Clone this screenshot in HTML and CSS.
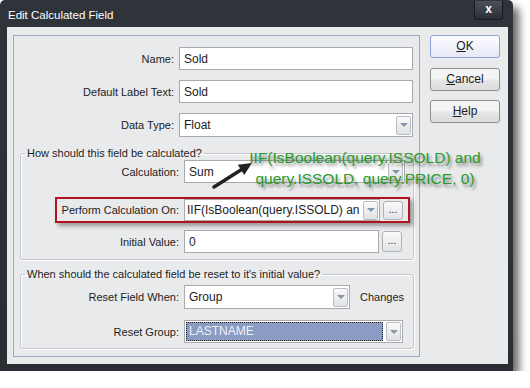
FILE: index.html
```html
<!DOCTYPE html>
<html lang="en">
<head>
    <meta charset="UTF-8">
    <title>Edit Calculated Field</title>
    <link rel="stylesheet" href="styles.css">
</head>
<body>
    <div class="window">
        <div class="titlebar">
            <span class="title">Edit Calculated Field</span>
            <span class="close">x</span>
        </div>
        <div class="client">
            <div class="panel">
                <div class="row">
                    <label>Name:</label>
                    <div class="field">Sold</div>
                </div>
                <div class="row">
                    <label>Default Label Text:</label>
                    <div class="field">Sold</div>
                </div>
                <div class="row tall">
                    <label>Data Type:</label>
                    <div class="field">Float<span class="drop"></span></div>
                </div>

                <fieldset class="group calc">
                    <legend>How should this field be calculated?</legend>
                    <div class="row">
                        <label>Calculation:</label>
                        <div class="field w-calc">Sum<span class="drop"></span></div>
                    </div>
                    <div class="row marked">
                        <label>Perform Calculation On:</label>
                        <div class="field w-perform">IIF(IsBoolean(query.ISSOLD) an<span class="drop"></span></div>
                        <span class="dots small">...</span>
                    </div>
                    <div class="row">
                        <label>Initial Value:</label>
                        <div class="field w-initial">0</div>
                        <span class="dots">...</span>
                    </div>
                </fieldset>

                <fieldset class="group reset">
                    <legend>When should the calculated field be reset to it's initial value?</legend>
                    <div class="row tall">
                        <label>Reset Field When:</label>
                        <div class="field w-when">Group<span class="drop"></span></div>
                        <span class="after">Changes</span>
                    </div>
                    <div class="row">
                        <label>Reset Group:</label>
                        <div class="field w-group"><span class="selected">LASTNAME</span><span class="drop"></span></div>
                    </div>
                </fieldset>
            </div>

            <div class="buttons">
                <div class="btn default"><u>O</u>K</div>
                <div class="btn"><u>C</u>ancel</div>
                <div class="btn"><u>H</u>elp</div>
            </div>
        </div>

        <div class="callout">IIF(IsBoolean(query.ISSOLD) and<br>query.ISSOLD, query.PRICE, 0)</div>
        <svg class="arrow" width="52" height="38" viewBox="0 0 52 38">
            <line x1="9" y1="32" x2="37" y2="14.3" stroke="#222" stroke-width="3.5" stroke-linecap="round"/>
            <polygon points="47,8 39.2,20 32.8,9.8" fill="#222"/>
        </svg>
    </div>
</body>
</html>
```

FILE: styles.css
```css
body {
    margin: 0;
    background: #fff;
    font-family: "Liberation Sans", Arial, sans-serif;
    font-size: 11px;
    color: #1c1c1c;
}

.window {
    position: relative;
    width: 513px;
    height: 371px;
    background: linear-gradient(#2f343a, #2a2e34);
    border-radius: 5px 5px 0 0;
    box-shadow: 6px 7px 9px rgba(0,0,0,0.6);
}

.titlebar {
    height: 27px;
    display: flex;
    justify-content: space-between;
    align-items: flex-start;
    padding-left: 8px;
}
.title {
    color: #fff;
    font-size: 11.5px;
    line-height: 13px;
    margin-top: 9px;
}
.close {
    width: 29px;
    height: 19px;
    margin: 1px 10px 0 0;
    box-sizing: border-box;
    border: 1px solid #16191c;
    border-top: 0;
    border-radius: 0 0 4px 4px;
    background: linear-gradient(#4c5158, #2b2f35);
    color: #fff;
    font-weight: bold;
    font-size: 12px;
    line-height: 16px;
    text-align: center;
}

.client {
    margin: 0 5px 0 7px;
    height: 337px;
    box-sizing: border-box;
    background: #e9eaec;
    display: flex;
    gap: 10px;
    padding: 8px 0 0 6px;
}

.panel {
    width: 407px;
    height: 322px;
    box-sizing: border-box;
    border: 1px solid #9aabbb;
    padding-top: 11px;
}

.row {
    display: flex;
    align-items: center;
    height: 23px;
    margin: 0 6px 10px 0;
}
.row.tall { height: 24px; }
.row label {
    width: 160px;
    margin-right: 5px;
    text-align: right;
    flex: none;
}

.field {
    flex: 1;
    height: 100%;
    box-sizing: border-box;
    background: #fff;
    border: 1px solid #a7abb0;
    font-size: 12px;
    padding-left: 4px;
    display: flex;
    align-items: center;
    white-space: nowrap;
    overflow: hidden;
}

.drop {
    width: 15px;
    height: 19px;
    box-sizing: border-box;
    margin: 0 1px 0 auto;
    border: 1px solid #b9bdc1;
    border-radius: 2px;
    background: linear-gradient(#fbfbfb, #dfe1e3);
    display: flex;
    align-items: center;
    justify-content: center;
    flex: none;
}
.drop::after {
    content: '';
    border-top: 4px solid #8196ab;
    border-left: 4px solid transparent;
    border-right: 4px solid transparent;
}

.group {
    margin: 7px 5px 0 6px;
    padding: 0 0 6px 0;
    min-width: 0;
    border: 1px solid #c3c7cb;
    border-radius: 3px;
    box-shadow: inset 1px 1px 0 #fff, 1px 1px 0 #fff;
}
.group legend {
    margin-left: 4px;
    padding: 0 2px;
    line-height: 13px;
}
.group .row { margin-right: 0; }
.group .row label { width: 158px; }
.group .row:last-child { margin-bottom: 0; }

.calc .row:first-of-type { margin-bottom: 14px; }
.w-calc { flex: none; width: 221px; }
.w-perform { flex: none; width: 196px; padding-left: 2px; }
.w-initial { flex: none; width: 195px; }

.row.marked {
    width: 355px;
    height: 26px;
    box-sizing: border-box;
    margin-left: 34px;
    margin-bottom: 7px;
    border: 2px solid #b1141b;
    box-shadow: 3px 3px 4px rgba(0,0,0,0.35);
}
.row.marked label { width: 122px; }
.row.marked .field { height: 22px; }

.dots {
    width: 20px;
    height: 21px;
    box-sizing: border-box;
    margin-left: 3px;
    border: 1px solid #aeb2b6;
    border-radius: 3px;
    background: linear-gradient(#fafafa, #e2e3e5);
    text-align: center;
    line-height: 17px;
    font-size: 10px;
}
.dots.small { height: 19px; line-height: 15px; }

.reset { margin-top: 8px; padding: 4px 0 5px 0; }
.reset .row.tall { margin-bottom: 11px; }
.w-when { flex: none; width: 166px; }
.w-group { flex: none; width: 219px; padding-left: 1px; }
.after { margin-left: 10px; }

.selected {
    flex: 1;
    height: 19px;
    box-sizing: border-box;
    border: 1px dotted #222;
    background: #8b9cc4;
    color: #eef1f8;
    line-height: 17px;
    padding-left: 2px;
    margin-right: 3px;
}

.buttons {
    display: flex;
    flex-direction: column;
}
.btn {
    width: 70px;
    height: 23px;
    box-sizing: border-box;
    margin-bottom: 10px;
    border: 1px solid #8f9091;
    border-radius: 3px;
    background: linear-gradient(#f4f4f4 45%, #e6e6e6 55%, #dcdcdc);
    font-size: 12px;
    line-height: 21px;
    text-align: center;
}
.btn.default {
    border-color: #8aa4dc;
    background: linear-gradient(#fdfdff, #e6e8f6);
}
.btn:last-child { margin-top: -1px; }

.callout {
    position: absolute;
    left: 244px;
    top: 147px;
    width: 242px;
    text-align: center;
    color: #2b9a2b;
    font-size: 15.5px;
    line-height: 21px;
    text-shadow: 2px 3px 3px rgba(0,0,0,0.45);
}

.arrow {
    position: absolute;
    left: 205px;
    top: 155px;
}
```
